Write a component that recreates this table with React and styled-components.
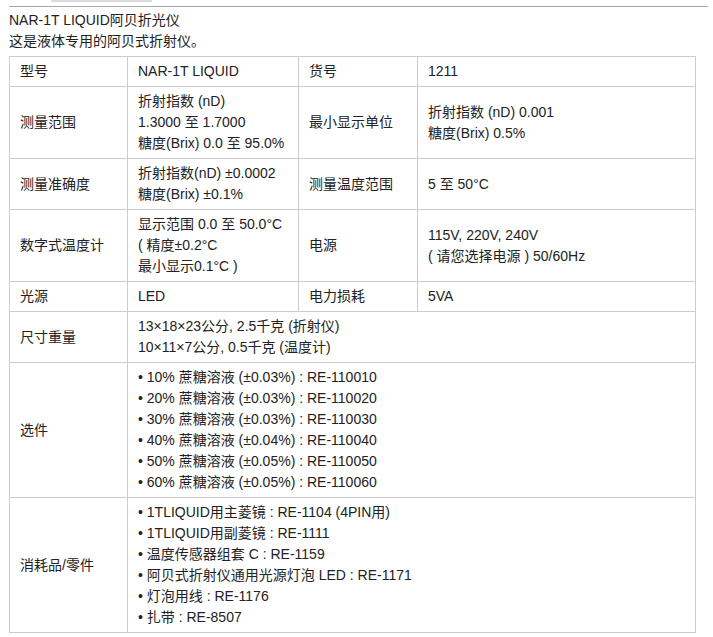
import React from 'react';
import styled, { createGlobalStyle } from 'styled-components';

const Global = createGlobalStyle`
    body {
        margin: 0;
        background: #fff;
        font-family: "Liberation Sans", Arial, "Noto Sans CJK SC", sans-serif;
        font-size: 14px;
        color: #222;
    }
`;

const Page = styled.div`
    width: 713px;
    padding: 0 5px 0 9px;
    box-sizing: border-box;
`;

const TopBar = styled.div`
    position: relative;
    height: 6px;
    border-bottom: 1px solid #a8a8a8;
    margin-bottom: 3px;
`;

const Tab = styled.div`
    position: absolute;
    left: 42px;
    top: 0;
    width: 101px;
    height: 2px;
    background: #dcdcdc;
`;

const Intro = styled.div`
    line-height: 21px;
    margin-bottom: 4px;
`;

const Table = styled.table`
    width: 686px;
    table-layout: fixed;
    border-collapse: collapse;
    line-height: 21px;
`;

const Cell = styled.td`
    border: 1px solid #cccccc;
    padding: 4px 10px;
    vertical-align: middle;
`;

const Line = styled.div``;

const specs = [
    ['型号', ['NAR-1T LIQUID'], '货号', ['1211']],
    ['测量范围', ['折射指数 (nD)', '1.3000 至 1.7000', '糖度(Brix) 0.0 至 95.0%'], '最小显示单位', ['折射指数 (nD) 0.001', '糖度(Brix) 0.5%']],
    ['测量准确度', ['折射指数(nD) ±0.0002', '糖度(Brix) ±0.1%'], '测量温度范围', ['5 至 50°C']],
    ['数字式温度计', ['显示范围 0.0 至 50.0°C', '( 精度±0.2°C', '最小显示0.1°C )'], '电源', ['115V, 220V, 240V', '( 请您选择电源 ) 50/60Hz']],
    ['光源', ['LED'], '电力损耗', ['5VA']],
];

const wide = [
    ['尺寸重量', ['13×18×23公分, 2.5千克 (折射仪)', '10×11×7公分, 0.5千克 (温度计)']],
    ['选件', [
        '• 10% 蔗糖溶液 (±0.03%) : RE-110010',
        '• 20% 蔗糖溶液 (±0.03%) : RE-110020',
        '• 30% 蔗糖溶液 (±0.03%) : RE-110030',
        '• 40% 蔗糖溶液 (±0.04%) : RE-110040',
        '• 50% 蔗糖溶液 (±0.05%) : RE-110050',
        '• 60% 蔗糖溶液 (±0.05%) : RE-110060',
    ]],
    ['消耗品/零件', [
        '• 1TLIQUID用主菱镜 : RE-1104 (4PIN用)',
        '• 1TLIQUID用副菱镜 : RE-1111',
        '• 温度传感器组套 C : RE-1159',
        '• 阿贝式折射仪通用光源灯泡 LED : RE-1171',
        '• 灯泡用线 : RE-1176',
        '• 扎带 : RE-8507',
    ]],
];

const Lines = ({ items }) => items.map((t, i) => <Line key={i}>{t}</Line>);

export default function App() {
    return (
        <Page>
            <Global />
            <TopBar><Tab /></TopBar>
            <Intro>
                <div>NAR-1T LIQUID阿贝折光仪</div>
                <div>这是液体专用的阿贝式折射仪。</div>
            </Intro>
            <Table>
                <colgroup>
                    <col style={{ width: 118 }} />
                    <col style={{ width: 171 }} />
                    <col style={{ width: 119 }} />
                    <col style={{ width: 278 }} />
                </colgroup>
                <tbody>
                    {specs.map(([a, b, c, d]) => (
                        <tr key={a}>
                            <Cell>{a}</Cell>
                            <Cell><Lines items={b} /></Cell>
                            <Cell>{c}</Cell>
                            <Cell><Lines items={d} /></Cell>
                        </tr>
                    ))}
                    {wide.map(([a, b]) => (
                        <tr key={a}>
                            <Cell>{a}</Cell>
                            <Cell colSpan={3}><Lines items={b} /></Cell>
                        </tr>
                    ))}
                </tbody>
            </Table>
        </Page>
    );
}
